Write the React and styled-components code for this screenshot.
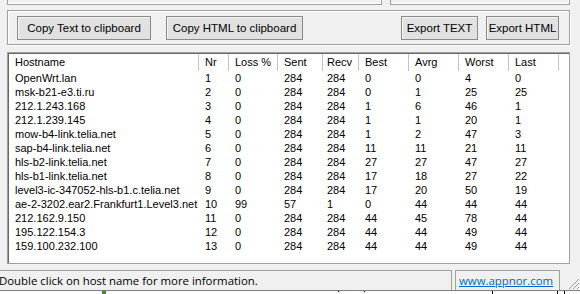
import React from "react";
import styled, { createGlobalStyle } from "styled-components";

const Global = createGlobalStyle`
  html, body { margin: 0; padding: 0; }
  body {
    width: 580px; height: 294px; overflow: hidden;
    background: #f0f0f0;
    font-family: "Liberation Sans", Arial, sans-serif;
  }
`;

const Window = styled.div`
  width: 580px; height: 294px;
  display: flex; flex-direction: column;
  background: #f0f0f0;
  overflow: hidden;
`;

const TopStrip = styled.div`
  display: flex; gap: 8px;
  height: 5px; padding: 0 10px 0 7px;
`;

const TopBox = styled.div`
  flex: ${(p) => p.$flex};
  border: 1px solid #a0a0a0; border-top: none;
  box-shadow: inset -1px -1px 0 #ffffff;
`;

const GroupBox = styled.div`
  margin: 5px 10px 0 7px;
  height: 35px; box-sizing: border-box;
  border: 1px solid #a0a0a0;
  box-shadow: inset 1px 1px 0 #ffffff, 1px 1px 0 #ffffff;
  display: flex; align-items: center;
  padding: 0 10px 0 9px;
  gap: 15px;
`;

const Spacer = styled.div` flex: 1; `;

const Button = styled.button`
  height: 24px; width: ${(p) => p.$w}px;
  margin: 0; padding: 0;
  margin-right: ${(p) => p.$mr || 0}px;
  background: #e1e1e1;
  border: 1px solid #8a8a8a;
  box-shadow: inset 1px 1px 0 #f4f4f4;
  font-family: "Liberation Sans", Arial, sans-serif;
  font-size: 11.5px; color: #000;
  display: flex; align-items: center; justify-content: center;
`;

const ListView = styled.div`
  margin: 7px 10px 0 7px;
  height: 212px; box-sizing: border-box;
  border: 1px solid #a0a0a0;
  box-shadow: inset 1px 1px 0 #696969;
  background: #ffffff;
  padding: 1px 1px 0 1px;
  overflow: hidden;
`;

const COLS = "190px 30px 49px 45px 36px 50px 50px 50px 50px 1fr";

const HeaderRow = styled.div`
  display: grid; grid-template-columns: ${COLS};
  height: 17px;
`;

const HeaderCell = styled.div`
  border-right: ${(p) => (p.$last ? "none" : "1px solid #c4c4c4")};
  padding-left: ${(p) => p.$pl ?? 6}px;
  font-size: 11px; line-height: 17px; color: #000;
  white-space: nowrap; overflow: hidden;
`;

const Row = styled.div`
  display: grid; grid-template-columns: ${COLS};
  height: 14px;
`;

const Cell = styled.div`
  padding-left: ${(p) => p.$pl ?? 6}px;
  font-size: 11px; line-height: 14px; color: #000;
  white-space: nowrap; overflow: hidden;
`;

const StatusBar = styled.div`
  margin-top: 6px;
  height: 20px;
  display: flex; align-items: stretch;
  font-family: "Open Sans", "Noto Sans", sans-serif;
  font-size: 11.4px;
`;

const StatusPanel = styled.div`
  width: ${(p) => p.$w}px;
  margin-left: ${(p) => p.$ml}px;
  box-sizing: border-box;
  border-top: 1px solid #a0a0a0;
  border-left: ${(p) => (p.$bl ? "1px solid #a0a0a0" : "none")};
  border-right: 1px solid #a0a0a0;
  display: flex; align-items: center;
  padding-left: ${(p) => p.$pl}px;
  white-space: nowrap; overflow: hidden;
  color: #000;
`;

const Link = styled.a`
  color: #0066cc; text-decoration: underline;
`;

const Grip = styled.div`
  flex: 1; display: flex; align-items: flex-end; justify-content: flex-end;
`;

const Outside = styled.div`
  height: 4px; box-sizing: border-box;
  border-top: 1px solid #7f7f7f;
  background: #ffffff;
  display: flex; align-items: flex-start;
  overflow: hidden;
  font-family: "Liberation Sans", Arial, sans-serif;
`;

const Mark = styled.div`
  width: ${(p) => p.$w}px; height: 3px;
  margin-left: ${(p) => p.$ml}px;
  background: ${(p) => p.$c};
`;

const OutsideText = styled.div`
  width: 38px;
  margin-left: ${(p) => p.$ml}px;
  font-size: 14px; line-height: 14px; color: #222;
  margin-top: -1px;
  white-space: nowrap;
`;

const headers = ["Hostname", "Nr", "Loss %", "Sent", "Recv", "Best", "Avrg", "Worst", "Last", ""];

const rows = [
  ["OpenWrt.lan", 1, 0, 284, 284, 0, 0, 4, 0],
  ["msk-b21-e3.ti.ru", 2, 0, 284, 284, 0, 1, 25, 25],
  ["212.1.243.168", 3, 0, 284, 284, 1, 6, 46, 1],
  ["212.1.239.145", 4, 0, 284, 284, 1, 1, 20, 1],
  ["mow-b4-link.telia.net", 5, 0, 284, 284, 1, 2, 47, 3],
  ["sap-b4-link.telia.net", 6, 0, 284, 284, 11, 11, 21, 11],
  ["hls-b2-link.telia.net", 7, 0, 284, 284, 27, 27, 47, 27],
  ["hls-b1-link.telia.net", 8, 0, 284, 284, 17, 18, 27, 22],
  ["level3-ic-347052-hls-b1.c.telia.net", 9, 0, 284, 284, 17, 20, 50, 19],
  ["ae-2-3202.ear2.Frankfurt1.Level3.net", 10, 99, 57, 1, 0, 44, 44, 44],
  ["212.162.9.150", 11, 0, 284, 284, 44, 45, 78, 44],
  ["195.122.154.3", 12, 0, 284, 284, 44, 44, 49, 44],
  ["159.100.232.100", 13, 0, 284, 284, 44, 44, 49, 44],
];

export default function App() {
  return (
    <Window>
      <Global />
      <TopStrip>
        <TopBox $flex="376" />
        <TopBox $flex="179" />
      </TopStrip>
      <GroupBox>
        <Button $w={134}>Copy Text to clipboard</Button>
        <Button $w={137}>Copy HTML to clipboard</Button>
        <Spacer />
        <Button $w={77} $mr={-7}>Export TEXT</Button>
        <Button $w={73}>Export HTML</Button>
      </GroupBox>
      <ListView>
        <HeaderRow>
          {headers.map((h, i) => (
            <HeaderCell key={i} $last={i === headers.length - 1} $pl={i === 4 ? 4 : 6}>
              {h}
            </HeaderCell>
          ))}
        </HeaderRow>
        {rows.map((r, i) => (
          <Row key={i}>
            {r.map((v, j) => (
              <Cell key={j} $pl={j === 4 ? 4 : 6}>{v}</Cell>
            ))}
            <Cell />
          </Row>
        ))}
      </ListView>
      <StatusBar>
        <StatusPanel $w={453} $ml={-1} $pl={0}>
          Double click on host name for more information.
        </StatusPanel>
        <StatusPanel $w={105} $ml={3} $pl={3} $bl>
          <Link href="#">www.appnor.com</Link>
        </StatusPanel>
        <Grip>
          <svg width="14" height="14" viewBox="0 0 14 14">
            <g stroke="#a0a0a0" strokeWidth="1">
              <line x1="13" y1="3" x2="3" y2="13" />
              <line x1="13" y1="7" x2="7" y2="13" />
              <line x1="13" y1="11" x2="11" y2="13" />
            </g>
          </svg>
        </Grip>
      </StatusBar>
      <Outside>
        <Mark $w={4} $ml={102} $c="#3a8a2a" />
        <OutsideText $ml={231}>invoice</OutsideText>
        <Mark $w={1} $ml={117} $c="#000" />
        <Mark $w={1} $ml={64} $c="#000" />
        <Mark $w={1} $ml={6} $c="#000" />
      </Outside>
    </Window>
  );
}
